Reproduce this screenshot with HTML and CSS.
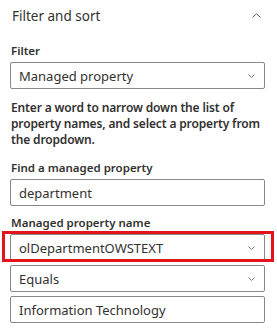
FILE: index.html
```html
<!DOCTYPE html>
<html lang="en">
<head>
  <meta charset="UTF-8">
  <title>Filter and sort</title>
  <link rel="stylesheet" href="styles.css">
</head>
<body>
<div class="panel">
  <div class="header">
    <span class="title">Filter and sort</span>
    <svg class="chev" width="9" height="5" viewBox="0 0 9 5"><path d="M0.5 4.5 L4.5 0.8 L8.5 4.5" fill="none" stroke="#605e5c" stroke-width="1"/></svg>
  </div>

  <label class="lbl first">Filter</label>
  <div class="box drop">
    <span>Managed property</span>
    <svg width="7" height="4" viewBox="0 0 7 4"><path d="M0.5 0.5 L3.5 3.5 L6.5 0.5" fill="none" stroke="#797775" stroke-width="1"/></svg>
  </div>

  <p class="desc">Enter a word to narrow down the list of property names, and select a property from the dropdown.</p>

  <label class="lbl">Find a managed property</label>
  <div class="box">
    <span>department</span>
  </div>

  <label class="lbl">Managed property name</label>
  <div class="highlight">
    <div class="box drop">
      <span>olDepartmentOWSTEXT</span>
      <svg width="7" height="4" viewBox="0 0 7 4"><path d="M0.5 0.5 L3.5 3.5 L6.5 0.5" fill="none" stroke="#797775" stroke-width="1"/></svg>
    </div>
  </div>
  <div class="box drop gap">
    <span>Equals</span>
    <svg width="7" height="4" viewBox="0 0 7 4"><path d="M0.5 0.5 L3.5 3.5 L6.5 0.5" fill="none" stroke="#797775" stroke-width="1"/></svg>
  </div>
  <div class="box gap">
    <span>Information Technology</span>
  </div>
</div>
</body>
</html>
```
FILE: styles.css
```css
body {
  margin: 0;
  background: #ffffff;
  font-family: "Noto Sans", "Open Sans", sans-serif;
  color: #323130;
}
.panel {
  padding: 0 12px 0 10px;
}
.header {
  height: 32px;
  display: flex;
  align-items: center;
  justify-content: space-between;
  padding: 0 4px 0 2px;
}
.title {
  font-size: 13.5px;
  font-weight: 400;
}
.chev {
  margin-top: -1px;
}
.lbl {
  display: block;
  font-size: 11.5px;
  font-weight: 600;
  line-height: 16px;
  margin: 9px 0 3px 1px;
}
.lbl.first {
  margin-top: 11px;
}
.box {
  box-sizing: border-box;
  height: 27px;
  border: 1px solid #8a8886;
  border-radius: 2px;
  display: flex;
  align-items: center;
  justify-content: space-between;
  padding: 0 8px 0 8px;
  font-size: 13px;
}
.drop svg {
  margin-right: 1px;
}
.gap {
  margin-top: 4px;
}
.desc {
  margin: 11px 0 12px 1px;
  font-size: 12px;
  font-weight: 600;
  letter-spacing: -0.15px;
  line-height: 16px;
}
.highlight {
  position: relative;
}
.highlight::after {
  content: "";
  position: absolute;
  top: -3px;
  bottom: -1px;
  left: -8px;
  right: -9px;
  border: 3px solid #e3131b;
}
```
